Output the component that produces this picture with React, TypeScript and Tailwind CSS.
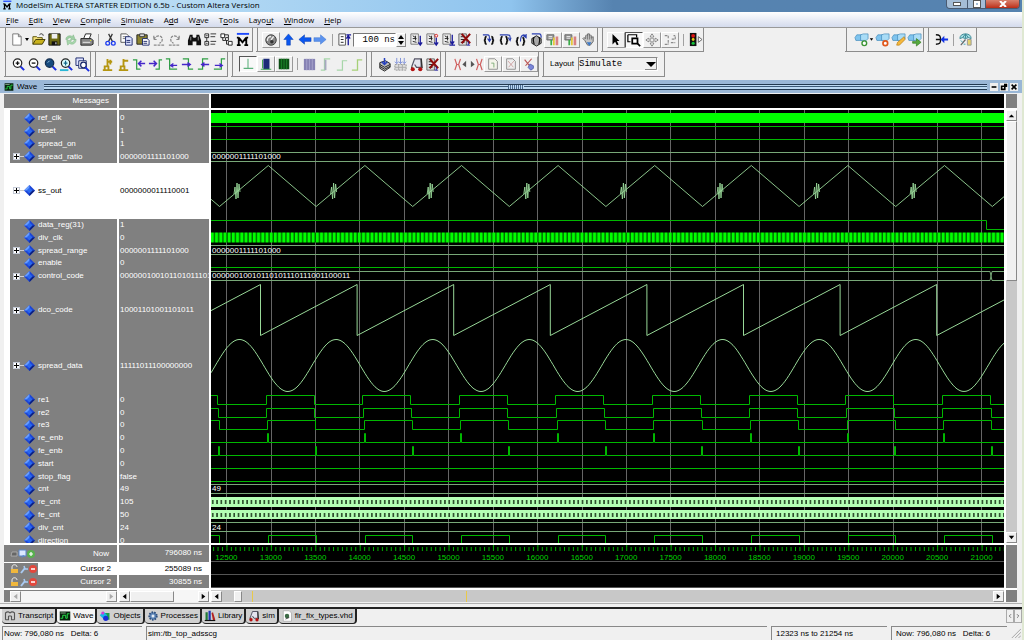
import type { ReactNode } from "react";
import { ChevronLeft, ChevronRight } from "lucide-react";

const NAVY = "#1c2a6b";
const GREEN = "#2f9e44";

// 16x16 toolbar glyphs
const icons: Record<string, ReactNode> = {
  newFile: <path d="M4 2h6l3 3v9H4zM10 2v3h3" fill="#fff" stroke="#777" />,
  open: (
    <>
      <path d="M2 13V5h4l1 1h5v2" fill="#f5e27a" stroke="#5c5208" />
      <path d="M2 13l3-5h10l-3 5z" fill="#c9b21c" stroke="#3f3a08" />
      <path d="M9 3c2-2 4-1 4 1" fill="none" stroke="#222" />
    </>
  ),
  save: (
    <>
      <path d="M2 2h12v12H2z" fill="#6d6a12" stroke="#111" />
      <path d="M5 2h6v5H5z" fill="#eee" />
      <path d="M5 10h6v4H5z" fill="#111" />
      <path d="M9 11h1v2H9z" fill="#fff" />
    </>
  ),
  refresh: (
    <>
      <path d="M3 8c0-4 5-5 7-3l1-2 2 5-5 0 1-1c-2-2-4 0-4 1z" fill="#9fd0a4" stroke="#82b688" strokeWidth=".6" />
      <path d="M14 8c0 5-5 6-7 4l-2 2-1-5 5 0-1 1c2 2 4 0 4-2z" fill="#a9d8ad" stroke="#82b688" strokeWidth=".6" />
    </>
  ),
  print: (
    <>
      <path d="M5 7l2-5h6l-2 5" fill="#fff" stroke="#222" />
      <path d="M2 7h11l2 2v4l-2 1H2z" fill="#888" stroke="#222" />
      <path d="M4 11h8" stroke="#eee" />
      <path d="M12 9h1" stroke="#ff0" />
    </>
  ),
  cut: (
    <>
      <path d="M6 2l4 8M10 2L6 10" stroke="#333" strokeWidth="1.3" />
      <circle cx="5" cy="12" r="2" fill="none" stroke="#1d3cf0" strokeWidth="1.4" />
      <circle cx="11" cy="12" r="2" fill="none" stroke="#1d3cf0" strokeWidth="1.4" />
    </>
  ),
  copy: (
    <>
      <path d="M2 2h6l2 2v7H2z" fill="#fff" stroke="#555" />
      <path d="M4 5h4M4 7h4" stroke="#777" />
      <path d="M7 5h5l2 2v7H7z" fill="#dfe4ff" stroke={NAVY} />
      <path d="M8 9h4M8 11h4" stroke={NAVY} />
    </>
  ),
  paste: (
    <>
      <path d="M2 3h11v10H2z" fill="#8c8430" stroke="#222" />
      <path d="M5 2h5v3H5z" fill="#ddd" stroke="#333" />
      <path d="M8 7h5l2 2v5H8z" fill="#fff" stroke={NAVY} />
      <path d="M9 10h4M9 12h4" stroke={NAVY} />
    </>
  ),
  undo: <path d="M3 4v4h4M3 8c2-5 9-5 9 0 0 2-1 3-3 4M3 14h11" fill="none" stroke="#8a8a8a" strokeWidth="1.300" strokeDasharray="3 1" />,
  redo: <path d="M13 4v4H9M13 8c-2-5-9-5-9 0 0 2 1 3 3 4M2 14h11" fill="none" stroke="#8a8a8a" strokeWidth="1.300" strokeDasharray="3 1" />,
  find: (
    <>
      <path d="M3 3h3v2l1 1h2l1-1V3h3l2 6v5h-5v-4H6v4H1V9z" fill="#111" />
      <path d="M4 5v4M12 5v4" stroke="#999" />
    </>
  ),
  collapse: (
    <>
      <path d="M2 2h4v4H2zM2 10h4v4H2z" fill="#fff" stroke="#222" />
      <path d="M3 4h2M3 12h2M4 6v4M8 2h6M8 5h5M8 10h6M8 13h5" stroke="#333" />
    </>
  ),
  hierarchy: (
    <>
      <path d="M2 2h4v4H2zM7 6h3v3H7zM10 10h4v4h-4z" fill="#fff" stroke="#222" />
      <path d="M6 3h4v3M4 6v3h3M8 9v4h2" fill="none" stroke="#222" />
    </>
  ),
  modelsim: (
    <>
      <path d="M2 2h13" stroke="#1d49ff" strokeWidth="2" />
      <path d="M4 14V6M4 6l4 5 4-5M12 6v8M2 14h4M10 14h4M2 6h2M12 6h2" fill="none" stroke="#000" strokeWidth="2" />
    </>
  ),
  gear: (
    <>
      <circle cx="8" cy="8" r="6" fill="#888" stroke="#333" />
      <path d="M8 8l3-4M4 9a4 4 0 0 1 4-5" stroke="#eee" strokeWidth="1.500" fill="none" />
      <circle cx="9" cy="10" r="2" fill="#333" />
    </>
  ),
  up: <path d="M8 2l5 6h-3v6H6V8H3z" fill="#0a57f0" stroke="#0637a8" strokeWidth=".5" />,
  left: <path d="M2 8l6-5v3h7v4H8v3z" fill="#0a57f0" stroke="#0637a8" strokeWidth=".5" />,
  right: <path d="M14 8L8 3v3H1v4h7v3z" fill="#5b92ee" stroke="#3b73d0" strokeWidth=".5" />,
  restart: (
    <>
      <path d="M2 2h7v12H2z" fill="#fff" stroke="#555" />
      <path d="M4 5h3M4 8h3M4 11h3" stroke="#222" />
      <path d="M12 14V4M10 7l2-3 2 3M10 3h5" fill="none" stroke="#1b1b9a" strokeWidth="1.400" />
    </>
  ),
  run: (
    <>
      <path d="M2 2h8v11H2z" fill="#eee" stroke="#777" />
      <path d="M4 4l3 2M4 7h4M4 10l4 1M7 4v5" stroke="#222" />
      <path d="M12 4v9M10 11l2 3 2-3" fill="none" stroke="#1b1b9a" strokeWidth="1.400" />
    </>
  ),
  runRed: (
    <>
      <path d="M2 2h8v11H2z" fill="#eee" stroke="#777" />
      <path d="M4 4l3 2M4 7h4M4 10l4 1M7 4v5" stroke="#222" />
      <circle cx="12" cy="4" r="1.500" fill="none" stroke="#d22" />
      <path d="M12 6v7M10 11l2 3 2-3" fill="none" stroke="#1b1b9a" strokeWidth="1.400" />
    </>
  ),
  runAll: (
    <>
      <path d="M2 2h8v11H2z" fill="#eee" stroke="#777" />
      <path d="M4 4l3 2M4 7h4M4 10l4 1M7 4v5" stroke="#222" />
      <path d="M12 3v9M10 10l2 3 2-3M9 14h6" fill="none" stroke="#1b1b9a" strokeWidth="1.400" />
    </>
  ),
  stop: (
    <>
      <path d="M2 2h8v12H2z" fill="#ddd" stroke="#666" />
      <path d="M4 5h4M4 8h4M4 11h4" stroke="#222" />
      <path d="M5 2l9 10M14 2L5 12" stroke="#8e0c0c" strokeWidth="2.200" />
      <path d="M12 10v4M10 14h4" stroke="#1b1b9a" />
    </>
  ),
  stepInto: (
    <>
      <path d="M6 5c-3 0 0 4-3 4 3 0 0 4 3 4M11 5c3 0 0 4 3 4-3 0 0 4-3 4" fill="none" stroke="#111" strokeWidth="1.800" />
      <path d="M2 3h5c2 0 2 1 2 6M7 7l2 3 2-3" fill="none" stroke="#2a3fb0" strokeWidth="1.200" />
    </>
  ),
  stepOver: (
    <>
      <path d="M6 5c-3 0 0 4-3 4 3 0 0 4 3 4M9 5c3 0 0 4 3 4-3 0 0 4-3 4" fill="none" stroke="#111" strokeWidth="1.800" />
      <path d="M3 3h8c3 0 3 1 3 4M12 6l2 3 1-3" fill="none" stroke="#2a3fb0" strokeWidth="1.200" />
    </>
  ),
  stepOut: (
    <>
      <path d="M6 6c-3 0 0 4-3 4 3 0 0 4 3 4M10 6c3 0 0 4 3 4-3 0 0 4-3 4" fill="none" stroke="#111" strokeWidth="1.800" />
      <path d="M8 10C8 2 12 2 14 5M11 4l3 2 0-4" fill="none" stroke="#2a3fb0" strokeWidth="1.200" />
    </>
  ),
  stepAll: (
    <>
      <path d="M8 4l5 3v5l-5 3-5-3V7z" fill="#aaa" stroke="#222" />
      <path d="M6 6c-3 0 0 3-2 3 2 0 0 4 2 4M10 6c3 0 0 3 2 3-2 0 0 4-2 4" fill="none" stroke="#111" strokeWidth="1.300" />
      <path d="M3 2h8c2 0 2 2 2 4" fill="none" stroke="#2a3fb0" strokeWidth="1.300" />
    </>
  ),
  profile: (
    <>
      <path d="M1 2h8v6H1z" fill="#999" stroke="#666" />
      <path d="M3 4h4M3 6h4" stroke="#eee" />
      <path d="M5 8h2v6H5z" fill="#3bab4a" />
      <path d="M8 5h2v9H8z" fill="#e5c93a" />
      <path d="M11 4h3v10h-3z" fill="#d98282" />
    </>
  ),
  hand: (
    <>
      <path d="M4 9L2 7l1-1 2 1V4l1-1 1 1V2h2v2l1-1 1 1v2l2-1v5l-3 4H7z" fill="#c4c4c4" stroke="#666" />
      <path d="M7 4v4M9 4v4M11 5v3" stroke="#777" />
      <path d="M6 11h5l-2 4z" fill="#3a78c9" />
    </>
  ),
  pointer: <path d="M4 1l8 8H9l2 4-2 1-2-4-3 3z" fill="#000" />,
  zoomMode: (
    <>
      <path d="M1 2h10v3M1 2v8h3" fill="none" stroke="#000" strokeWidth="1.400" />
      <path d="M6 6h6v6H6z" fill="#fff" stroke="#000" strokeWidth="2" />
      <path d="M12 12l3 3" stroke="#000" strokeWidth="2" />
    </>
  ),
  pan: <path d="M8 1l2 3H9v3h3V6l3 2-3 2V9H9v3h1l-2 3-2-3h1V9H4v1L1 8l3-2v1h3V4H6z" fill="#fff" stroke="#777" />,
  edit: <path d="M2 3h4v3M2 13h4M6 8v5M9 11h5M10 7h4V3h-2" fill="none" stroke="#8a8a8a" strokeWidth="1.300" strokeDasharray="3 1" />,
  traffic: (
    <>
      <path d="M2 1h7v14H2z" fill="#111" />
      <circle cx="5.500" cy="4" r="2" fill="#e01515" />
      <circle cx="5.500" cy="8" r="1.500" fill="#e8cf17" />
      <circle cx="5.500" cy="12" r="1.700" fill="#14c53a" />
      <path d="M11 5l4 3-4 3z" fill="#fff" stroke="#666" />
    </>
  ),
  cubeAdd: (
    <>
      <path d="M1 6l2-3h5v6H2z" fill="#7fc4ee" stroke="#3d86b8" strokeWidth=".7" />
      <path d="M7 3l3-1 5 0v5l-2 2H7z" fill="#a9dcf6" stroke="#3d86b8" strokeWidth=".7" />
      <circle cx="11" cy="12" r="2.500" fill="#fff" stroke="#3c9435" strokeWidth="1.500" />
    </>
  ),
  cubeRemove: (
    <>
      <path d="M1 6l2-3h5v6H2z" fill="#7fc4ee" stroke="#3d86b8" strokeWidth=".7" />
      <path d="M7 3l3-1 5 0v5l-2 2H7z" fill="#a9dcf6" stroke="#3d86b8" strokeWidth=".7" />
      <circle cx="11" cy="12" r="2.500" fill="#fff" stroke="#e0571b" strokeWidth="1.800" />
    </>
  ),
  cubeEdit: (
    <>
      <path d="M1 6l2-3h5v6H2z" fill="#7fc4ee" stroke="#3d86b8" strokeWidth=".7" />
      <path d="M7 3l3-1 5 0v5l-2 2H7z" fill="#a9dcf6" stroke="#3d86b8" strokeWidth=".7" />
      <path d="M14 5l1 3-6 6-3 0 1-3z" fill="#f5b83c" stroke="#b57b16" strokeWidth=".7" />
    </>
  ),
  cubeGo: (
    <>
      <path d="M1 6l2-3h5v6H2z" fill="#7fc4ee" stroke="#3d86b8" strokeWidth=".7" />
      <path d="M7 3l3-1 5 0v5l-2 2H7z" fill="#a9dcf6" stroke="#3d86b8" strokeWidth=".7" />
      <path d="M6 10h4V7l5 4-5 4v-3H6z" fill="#56ab3e" stroke="#33791f" strokeWidth=".7" />
    </>
  ),
  merge: (
    <>
      <path d="M2 3c4 0 5 1 5 5-0 4-1 5-5 5M2 8h5" fill="none" stroke="#111" strokeWidth="1.500" />
      <path d="M7 8l4-4v3h4v2h-4v3z" fill="#1233e6" />
    </>
  ),
  globe: (
    <>
      <path d="M2 7c0-3 2-5 6-5s6 2 6 5l-3-1-3 1-3-1z" fill="#a5dde2" stroke="#3d8a96" />
      <path d="M5 6l3-4 3 4M8 2v5" stroke="#3d8a96" fill="none" />
      <path d="M10 8h4v6h-4z" fill="#e4d36d" stroke="#999" />
      <path d="M3 14l5-6" stroke="#666" strokeWidth="1.300" />
      <path d="M3 9l2 2M6 13h2" stroke="#3aa6b8" />
    </>
  ),
  zoomIn: (
    <>
      <path d="M10 10l4 4" stroke="#1d2fe0" strokeWidth="2.200" />
      <circle cx="7" cy="6.500" r="4.500" fill="#fff" stroke="#222" strokeWidth="1.300" />
      <path d="M5 6.500h4M7 4.500v4" stroke="#111" strokeWidth="1.400" />
    </>
  ),
  zoomOut: (
    <>
      <path d="M10 10l4 4" stroke="#1d2fe0" strokeWidth="2.200" />
      <circle cx="7" cy="6.500" r="4.500" fill="#fff" stroke="#222" strokeWidth="1.300" />
      <path d="M5 6.500h4" stroke="#111" strokeWidth="1.400" />
    </>
  ),
  zoomFull: (
    <>
      <path d="M10 10l4 4" stroke="#1d2fe0" strokeWidth="2.200" />
      <circle cx="7" cy="6.500" r="4.500" fill="#164a7e" stroke="#112c4e" strokeWidth="1.300" />
      <path d="M5 6l2-2" stroke="#a8cbe8" />
    </>
  ),
  zoomCursor: (
    <>
      <path d="M1 14h9" stroke="#29b7d6" strokeWidth="2" />
      <path d="M10 10l4 4" stroke="#1d2fe0" strokeWidth="2.200" />
      <circle cx="7" cy="6.500" r="4.500" fill="#dff" stroke="#222" strokeWidth="1.300" />
      <path d="M5 6.500h4M7 4v5" stroke="#168" strokeWidth="1.300" />
    </>
  ),
  zoomArea: (
    <>
      <path d="M1 1h8v8H1z" fill="#dfe3ff" stroke={NAVY} />
      <path d="M4 4h8v8H4z" fill="#fff" stroke={NAVY} />
      <circle cx="9" cy="8.500" r="3" fill="#fff" stroke={NAVY} strokeWidth="1.300" />
      <path d="M11 11l4 4" stroke="#1d2fe0" strokeWidth="2" />
    </>
  ),
  cursorAdd: <path d="M3 14h10M5 14v-4h4v4M8 10V2M8 5h5M11 3v5" fill="none" stroke="#b59610" strokeWidth="2" />,
  cursorDel: <path d="M3 14h10M5 14v-4h4v4M8 10V2M8 4h5" fill="none" stroke="#b59610" strokeWidth="2" />,
  edgePrev: (
    <>
      <path d="M1 3h4v10h4" fill="none" stroke={GREEN} strokeWidth="1.300" />
      <path d="M14 7H8M10 4L7 7l3 3" fill="none" stroke="#4527c9" strokeWidth="1.600" />
    </>
  ),
  edgeNext: (
    <>
      <path d="M8 13h4V3h3" fill="none" stroke={GREEN} strokeWidth="1.300" />
      <path d="M1 7h7M6 4l3 3-3 3" fill="none" stroke="#4527c9" strokeWidth="1.600" />
    </>
  ),
  fallPrev: (
    <>
      <path d="M2 2h4v11h8" fill="none" stroke={GREEN} strokeWidth="1.300" />
      <path d="M14 9H8M10 7L7 9l3 2" fill="none" stroke="#4527c9" strokeWidth="1.400" />
    </>
  ),
  fallNext: (
    <>
      <path d="M3 2h6v11h5" fill="none" stroke={GREEN} strokeWidth="1.300" />
      <path d="M2 8h8M8 6l3 2-3 2" fill="none" stroke="#4527c9" strokeWidth="1.400" />
    </>
  ),
  risePrev: (
    <>
      <path d="M2 13h5V2h6" fill="none" stroke={GREEN} strokeWidth="1.300" />
      <path d="M14 8H7M9 6L6 8l3 2" fill="none" stroke="#4527c9" strokeWidth="1.400" />
    </>
  ),
  riseNext: (
    <>
      <path d="M2 13h8V2h4" fill="none" stroke={GREEN} strokeWidth="1.300" />
      <path d="M3 9h7M8 7l3 2-3 2" fill="none" stroke="#4527c9" strokeWidth="1.400" />
    </>
  ),
  flatMode: <path d="M3 13h11M8 2v11" stroke="#5cb07b" strokeWidth="1.200" />,
  barsBlue: (
    <>
      <path d="M5 2h7v12H5z" fill="#1b2a78" />
      <path d="M2 14h12M4 3v10" stroke={GREEN} />
    </>
  ),
  barsGreen: (
    <>
      <path d="M2 2h12v12H2z" fill="#0c4f14" />
      <path d="M5 2v12M8 2v12M11 2v12" stroke="#1f8a2c" />
    </>
  ),
  barsFaded: (
    <>
      <path d="M2 2h12v12H2z" fill="#8783b4" />
      <path d="M5 2v12M8 2v12M11 2v12" stroke="#a5a2cc" />
    </>
  ),
  riseFaded: (
    <>
      <path d="M3 14h4V2h6" fill="none" stroke="#a7d6a9" strokeWidth="1.500" />
      <path d="M8 3v11" stroke="#a8a8c0" strokeWidth="2" />
    </>
  ),
  riseThin: <path d="M3 14h6V4h5" fill="none" stroke="#a7d6a9" strokeWidth="1.300" />,
  riseYellow: <path d="M2 14h6V3h5" fill="none" stroke="#a6d077" strokeWidth="1.400" />,
  cubeDown: (
    <>
      <path d="M3 6l6-2 5 3v4l-6 4-5-3z" fill="#bbb" stroke="#222" />
      <path d="M3 8l5 3 6-3M3 10l5 3 6-3" fill="none" stroke="#222" />
      <path d="M8 1v6M5 5l3 3 3-3" fill="none" stroke="#2740c0" strokeWidth="1.600" />
    </>
  ),
  cubesDown: (
    <>
      <path d="M2 8h12v6H2z" fill="#ddd" stroke="#999" strokeDasharray="2 1" />
      <path d="M2 11h12M6 8v6M10 8v6" stroke="#aaa" />
      <path d="M4 1v6M8 1v6M12 1v6M2 5l2 2 2-2M6 5l2 2 2-2M10 5l2 2 2-2" fill="none" stroke="#7d8fd8" />
    </>
  ),
  design: (
    <>
      <path d="M3 10L6 2h7v9H8l-2-3" fill="#e4e4ee" stroke="#556" strokeWidth="1.300" />
      <path d="M13 2l1 10M3 10v3" stroke="#333" strokeWidth="1.500" />
      <circle cx="4" cy="13" r="2.200" fill="#b51212" />
      <circle cx="12" cy="13" r="2.200" fill="#b51212" />
    </>
  ),
  xLeft: (
    <>
      <path d="M2 2l2 6-2 6M8 2L6 8l2 6M4 8h2" fill="none" stroke="#d06060" strokeWidth="1.300" />
      <path d="M14 4v7l-4-3z" fill="#555" />
    </>
  ),
  xRight: (
    <>
      <path d="M8 2l2 6-2 6M14 2l-2 6 2 6M10 8h2" fill="none" stroke="#d06060" strokeWidth="1.300" />
      <path d="M2 4v7l4-3z" fill="#555" />
    </>
  ),
  docGreen: (
    <>
      <path d="M3 2h7l3 3v9H3z" fill="#f4f4ea" stroke="#888" />
      <path d="M6 7h3v5" fill="none" stroke="#77a870" />
    </>
  ),
  docRed: (
    <>
      <path d="M3 2h7l3 3v9H3z" fill="#eee" stroke="#888" />
      <path d="M5 5l6 7M11 5l-6 7" stroke="#b77" strokeDasharray="2 1" />
    </>
  ),
  docRemove: (
    <>
      <path d="M3 3l8 10M11 2L4 10" stroke="#b55" strokeWidth="1.300" />
      <path d="M9 8l4 2v3l-3 2-3-3z" fill="#7b87d8" stroke="#5661b0" />
    </>
  ),
  transcript: <path d="M2 13V4c3-3 5-1 6 0M14 13V4c-3-3-5-1-6 0M2 13h4V8M14 13h-4V8M6 8h4" fill="none" stroke="#555" strokeWidth="1.500" />,
  wave: (
    <>
      <path d="M1 2h14v12H1z" fill="#06210c" />
      <path d="M2 11h3V7h4v4h2V5h3" fill="none" stroke="#27e04a" strokeWidth="1.300" />
      <path d="M2 4h7" stroke="#b7d3b7" />
    </>
  ),
  objects: (
    <>
      <path d="M7 4h7v9H7z" fill="#1aa04a" />
      <path d="M6 2l5 5-5 5-5-5z" fill="#18b4e8" />
      <circle cx="9" cy="11" r="3.500" fill="#1b2fd8" />
      <circle cx="5" cy="4" r="2" fill="#d43bd4" />
    </>
  ),
  processes: (
    <>
      <circle cx="8" cy="8" r="5" fill="#5e86b8" stroke="#2f4f7d" strokeWidth="2.500" strokeDasharray="2 1.500" />
      <circle cx="8" cy="8" r="2" fill="#e5ecf5" />
    </>
  ),
  library: (
    <>
      <path d="M2 3h3v11H2z" fill="#207a38" />
      <path d="M6 1h3v13H6z" fill="#1f37b4" />
      <path d="M10 4l2-1 3 10-3 1z" fill="#b32020" />
      <path d="M1 14h14" stroke="#111" strokeWidth="1.500" />
    </>
  ),
  source: (
    <>
      <path d="M3 1h8l3 3v11H3z" fill="#fff" stroke="#aaa" />
      <circle cx="8" cy="8" r="3" fill="#3c6b46" />
      <path d="M6 12l5-2" stroke="#222" />
    </>
  ),
};

const Icon = ({ name, className = "size-[15px]" }: { name: string; className?: string }) => (
  <svg viewBox="0 0 16 16" className={`shrink-0 ${className}`} aria-hidden="true">
    {icons[name]}
  </svg>
);

const Tool = ({ name }: { name: string }) => (
  <button aria-label={name} className="flex w-4 shrink-0 items-center justify-center">
    <Icon name={name} />
  </button>
);

const RaisedTool = ({ name, pressed = false }: { name: string; pressed?: boolean }) => (
  <button
    aria-label={name}
    className={`flex h-4 w-[18px] shrink-0 items-center justify-center border ${
      pressed ? "border-r-white border-b-white border-t-[#555] border-l-[#555] bg-[#f8f8f8]" : "border-t-white border-l-white border-r-[#999] border-b-[#999]"
    }`}
  >
    <Icon name={name} className="size-[14px]" />
  </button>
);

const Sep = () => (
  <div className="flex w-2 shrink-0 items-center justify-center">
    <div className="h-3 w-px bg-[#a0a0a0]" />
  </div>
);

const Group = ({ children, className = "" }: { children: ReactNode; className?: string }) => (
  <div className={`flex shrink-0 items-center border-r border-b border-[#8c8c8c] pl-1 ${className}`}>
    <div className="-ml-[3px] mr-[2px] h-full w-px shrink-0 bg-[#8c8c8c]" />
    {children}
  </div>
);

const menus = [
  ["", "F", "ile"],
  ["", "E", "dit"],
  ["", "V", "iew"],
  ["", "C", "ompile"],
  ["", "S", "imulate"],
  ["A", "d", "d"],
  ["W", "a", "ve"],
  ["T", "o", "ols"],
  ["Layo", "u", "t"],
  ["", "W", "indow"],
  ["", "H", "elp"],
];

type Signal = { name: string; value: string; tall?: boolean; bus?: boolean; selected?: boolean; label?: string };

const signals: Signal[] = [
  { name: "ref_clk", value: "0" },
  { name: "reset", value: "1" },
  { name: "spread_on", value: "1" },
  { name: "spread_ratio", value: "0000001111101000", bus: true, label: "0000001111101000" },
  { name: "ss_out", value: "0000000011110001", bus: true, tall: true, selected: true },
  { name: "data_reg(31)", value: "1" },
  { name: "div_clk", value: "0" },
  { name: "spread_range", value: "0000001111101000", bus: true, label: "0000001111101000" },
  { name: "enable", value: "0" },
  { name: "control_code", value: "000000100101101011101", bus: true, label: "00000010010110101110111001100011" },
  { name: "dco_code", value: "10001101001101011", bus: true, tall: true },
  { name: "spread_data", value: "11111011100000000", bus: true, tall: true },
  { name: "re1", value: "0" },
  { name: "re2", value: "0" },
  { name: "re3", value: "0" },
  { name: "re_enb", value: "0" },
  { name: "fe_enb", value: "0" },
  { name: "start", value: "0" },
  { name: "stop_flag", value: "false" },
  { name: "cnt", value: "49", label: "49" },
  { name: "re_cnt", value: "105" },
  { name: "fe_cnt", value: "50" },
  { name: "div_cnt", value: "24", label: "24" },
  { name: "direction", value: "0" },
];

const SignalRows = ({ render, className = "" }: { render: (s: Signal) => ReactNode; className?: string }) => (
  <div className={`flex h-[437px] flex-col pt-[2px] ${className}`}>
    {signals.map((s) => (
      <div key={s.name} className={`flex min-h-0 items-center ${s.tall ? "flex-[13]" : "flex-[3]"}`}>
        {render(s)}
      </div>
    ))}
  </div>
);

const Diamond = () => (
  <svg viewBox="0 0 11 11" className="size-[11px] shrink-0" aria-hidden="true">
    <path d="M5.500 0L11 5.500 5.500 11 0 5.500z" fill="#1b44d6" />
    <path d="M5.500 0L0 5.500h5.500z" fill="#6aa0ff" />
    <path d="M5.500 11L11 5.500H5.500z" fill="#0d2080" />
    <path d="M5.500 2.500L8.500 5.500 5.500 8.500 2.500 5.500z" fill="#2a68f0" />
  </svg>
);

// Trace geometry. View is 793 wide (12323 ns to 21254 ns), 433 high.
const W = 793;
const PERIOD = 96.6;
const cycles = Array.from({ length: 10 }, (_, i) => i - 1);

const triangle = cycles.map((c) => `${c < 0 ? "M" : "L"}${8.5 + c * PERIOD} 96.500L${57.3 + c * PERIOD} 55.500`).join("");

const saw = cycles.map((c) => `${c < 0 ? "M" : "L"}${49.5 + (c - 1) * PERIOD} 225.500L${49.5 + c * PERIOD} 174.500V225.500`).join("");

const sine = Array.from({ length: W / 2 + 2 }, (_, i) => {
  const x = i * 2;
  const y = 255.5 - 26 * Math.cos(((x - 28.5) / PERIOD) * 2 * Math.PI);
  return `${i ? "L" : "M"}${x} ${y.toFixed(1)}`;
}).join("");

const square = (high: number, low: number, shift: number) =>
  `M0 ${high}` + cycles.slice(1).map((c) => `H${Math.round(6 + shift + c * PERIOD) + 0.5}V${low}H${Math.round(54.5 + shift + c * PERIOD) + 0.5}V${high}`).join("");

const pulses = (base: number, first: number) =>
  `M0 ${base}` + cycles.slice(1).map((c) => {
    const x = Math.round(first + c * PERIOD) + 0.5;
    return `H${x}V${base - 9}h1V${base}`;
  }).join("") + `H${W}`;

const direction = "M0 425.500" + cycles.slice(1).map((c) => `H${Math.round(8 + c * PERIOD) + 0.5}V435H${Math.round(57 + c * PERIOD) + 0.5}V425.500`).join("");

const gridLines = Array.from({ length: 18 }, (_, i) => Math.round(15.2 + i * 44.42) + 0.5);

const Traces = () => (
  <svg viewBox="0 0 793 433" preserveAspectRatio="none" className="block h-[433px] w-full" role="img" aria-label="Waveforms">
    <defs>
      <pattern id="divClk" width="4.200" height="10" patternUnits="userSpaceOnUse">
        <path d="M0 0h5v10H0z" fill="#006a00" />
        <path d="M0 0h2.800v10H0z" fill="#0f0" />
      </pattern>
      <pattern id="cntTicks" width="4.300" height="10" patternUnits="userSpaceOnUse">
        <path d="M1 0h1.500v10H1z" fill="#1d3a1d" />
      </pattern>
    </defs>
    {gridLines.map((x) => (
      <path key={x} d={`M${x} 0V433`} stroke="#666" />
    ))}
    <path d="M0 3h793v10H0z" fill="#0f0" />
    <g fill="none" stroke="#00b800">
      <path d="M0 16.500H793M0 29.500H793M0 110.500H775.500V119.500H793M0 157.500H793M0 358.500H793M0 371.500H793" />
      <path d={square(285.5, 294.5, 0)} />
      <path d={square(298.5, 307.5, 0.7)} />
      <path d={square(310.5, 319.5, 1.5)} />
      <path d={pulses(332.5, 56)} />
      <path d={pulses(345.5, 7.3)} />
      <path d={direction} />
    </g>
    <g fill="none" stroke="#78a878">
      <path d="M0 42.500H793M0 51.500H793M0 135.500H793M0 144.500H793M0 161.500H779L781 170.500H793M0 170.500H779L781 161.500H793" />
      <path d="M0 374.500H793M0 383.500H793M0 412.500H793M0 421.500H793" />
    </g>
    <g fill="none" stroke="#98d898">
      <path d={triangle} strokeWidth=".9" />
      {cycles.slice(1).map((c) => (
        <path key={c} d={`M${23 + c * PERIOD} 84l1-7 1 12 1-16 1 15 1-14 1 8`} strokeWidth=".9" />
      ))}
      <path d={saw} />
      <path d={sine} />
    </g>
    <path d="M0 122.500h793v10H0z" fill="url(#divClk)" />
    <path d="M0 387h793v10H0zM0 400h793v9H0z" fill="#b4ffb4" />
    <path d="M0 390h793v4H0zM0 403h793v4H0z" fill="url(#cntTicks)" />
  </svg>
);

const ticks = Array.from({ length: 179 }, (_, i) => ({ x: 2.1 + i * 4.442, major: i % 10 === 3 }));

const Timeline = () => (
  <svg className="block h-[43px] w-full bg-black" role="img" aria-label="Time axis">
    {ticks.map(({ x, major }) => (
      <rect key={x} x={`${(x / W) * 100}%`} y={major ? 0 : 2} width="1" height={major ? 6 : 4} fill="#00b400" />
    ))}
    {ticks.filter((t) => t.major).map(({ x }, i) => (
      <text key={x} x={`${(x / W) * 100}%`} y="15" textAnchor="middle" fill="#00d000" fontSize="8">
        {12500 + i * 500}
      </text>
    ))}
    <rect y="16" width="100%" height="1" fill="#555" />
    <rect y="29" width="100%" height="1" fill="#555" />
    <rect y="42" width="100%" height="1" fill="#555" />
  </svg>
);

const CursorIcons = () => (
  <svg viewBox="0 0 28 10" className="h-[10px] w-7 shrink-0" aria-hidden="true">
    <path d="M2 5V3c0-3 5-3 5 0" fill="none" stroke="#eee" />
    <path d="M1 5h7v4H1z" fill="#f0b73c" />
    <path d="M11 9l4-5" stroke="#a9caf2" strokeWidth="2" />
    <path d="M14 2l1 3 3 0" fill="none" stroke="#a9caf2" strokeWidth="1.500" />
    <circle cx="23" cy="5" r="4" fill="#e2483d" />
    <path d="M21 5h4" stroke="#fff" strokeWidth="1.500" />
  </svg>
);

const NowIcons = () => (
  <svg viewBox="0 0 28 10" className="h-[10px] w-7 shrink-0" aria-hidden="true">
    <path d="M1 7l1-4h5v4z" fill="#666" stroke="#bbb" strokeWidth=".7" />
    <path d="M9 1h7v6H9z" fill="#dbe8ff" stroke="#5b86c9" />
    <path d="M11 9l2-3 2 1z" fill="#5b86c9" />
    <circle cx="21" cy="5" r="4" fill="#58b04e" />
    <path d="M19 5h4M21 3v4" stroke="#fff" strokeWidth="1.200" />
  </svg>
);

const Arrow = ({ dir, faded = false }: { dir: "left" | "right" | "up" | "down"; faded?: boolean }) => {
  const paths = { left: "M7 2v6L3 5z", right: "M3 2v6l4-3z", up: "M2 7h6L5 4z", down: "M2 3h6L5 7z" };
  return (
    <button aria-label={dir} className="flex size-[11px] shrink-0 items-center justify-center border border-t-white border-l-white border-r-[#888] border-b-[#888] bg-[#f0f0f0]">
      <svg viewBox="0 0 10 10" className="size-[9px]">
        <path d={paths[dir]} fill={faded ? "#aaa" : "#000"} />
      </svg>
    </button>
  );
};

const tabs = [
  { label: "Transcript", icon: "transcript" },
  { label: "Wave", icon: "wave" },
  { label: "Objects", icon: "objects" },
  { label: "Processes", icon: "processes" },
  { label: "Library", icon: "library" },
  { label: "sim", icon: "design" },
  { label: "fir_fix_types.vhd", icon: "source" },
];

const TitleBar = () => (
  <header className="flex h-3 shrink-0 items-start bg-linear-to-r from-[#bfe0f5] from-10% via-[#8fc4ee] via-50% to-[#5683b0] to-60%">
    <Icon name="modelsim" className="ml-[2px] size-[10px]" />
    <h1 className="ml-1 font-['Open_Sans',sans-serif] text-[8px] leading-[9px] whitespace-nowrap">ModelSim ALTERA STARTER EDITION 6.5b - Custom Altera Version</h1>
    <div className="mr-[2px] ml-auto flex h-[9px] overflow-hidden rounded-b-sm border border-t-0 border-[#4a5a70]">
      <button aria-label="Minimize" className="flex w-5 items-center justify-center bg-[#a5bdd6]">
        <span className="h-1 w-2 border border-[#555] bg-white" />
      </button>
      <button aria-label="Restore" className="flex w-[19px] items-center justify-center border-x border-[#4a5a70] bg-[#a5bdd6]">
        <span className="size-[6px] border-2 border-white outline outline-[#555]" />
      </button>
      <button aria-label="Close" className="flex w-[33px] items-center justify-center bg-linear-to-b from-[#d8806c] to-[#bb2b14]">
        <svg viewBox="0 0 8 6" className="h-[6px] w-2">
          <path d="M1 0l6 6M7 0L1 6" stroke="#fff" strokeWidth="2" />
        </svg>
      </button>
    </div>
  </header>
);

const MenuBar = () => (
  <nav className="flex h-4 shrink-0 items-center gap-[10px] border-b border-[#999] bg-linear-to-b from-white to-[#d4dbed] pl-[6px] font-['Open_Sans',sans-serif] text-[8px]">
    {menus.map(([pre, key, post]) => (
      <button key={pre + key + post} className="leading-3">
        {pre}
        <span className="underline">{key}</span>
        {post}
      </button>
    ))}
  </nav>
);

const Toolbars = () => (
  <div className="shrink-0 pb-[3px] pl-1">
    <div className="flex h-6 gap-[3px] pr-[45px]">
      <Group className="pr-[2px]">
        <Tool name="newFile" />
        <svg viewBox="0 0 6 4" className="h-1 w-[6px] shrink-0"><path d="M1 0h4L3 3z" /></svg>
        <Tool name="open" />
        <Tool name="save" />
        <Tool name="refresh" />
        <Tool name="print" />
        <Sep />
        <Tool name="cut" />
        <Tool name="copy" />
        <Tool name="paste" />
        <Tool name="undo" />
        <Tool name="redo" />
        <div className="w-1" />
        <Tool name="find" />
        <Tool name="collapse" />
        <Tool name="hierarchy" />
        <Tool name="modelsim" />
      </Group>
      <Group className="pr-px">
        <div className="w-[2px]" />
        <RaisedTool name="gear" />
        <Tool name="up" />
        <Tool name="left" />
        <Tool name="right" />
        <Sep />
        <Tool name="restart" />
        <input
          aria-label="Run length"
          defaultValue="100 ns"
          className="ml-px h-[14px] w-[43px] border border-t-[#777] border-l-[#777] border-r-white border-b-white bg-white text-right font-['Liberation_Mono',monospace] text-[9px]"
        />
        <button aria-label="Step run length" className="mr-[2px] flex h-[14px] w-[10px] shrink-0 items-center justify-center border border-t-white border-l-white border-r-[#888] border-b-[#888]">
          <svg viewBox="0 0 8 12" className="h-3 w-2"><path d="M1 5h6L4 1zM1 7h6l-3 4z" /></svg>
        </button>
        <Tool name="run" />
        <Tool name="runRed" />
        <Tool name="runAll" />
        <Tool name="stop" />
        <Sep />
        <Tool name="stepInto" />
        <Tool name="stepOver" />
        <Tool name="stepOut" />
        <Tool name="stepAll" />
        <RaisedTool name="profile" />
        <RaisedTool name="profile" />
        <Tool name="hand" />
      </Group>
      <Group>
        <div className="w-[2px]" />
        <RaisedTool name="pointer" />
        <RaisedTool name="zoomMode" pressed />
        <RaisedTool name="pan" />
        <RaisedTool name="edit" />
        <Sep />
        <Tool name="traffic" />
      </Group>
      <Group className="ml-auto pr-px">
        <div className="w-1" />
        <Tool name="cubeAdd" />
        <svg viewBox="0 0 6 4" className="h-1 w-[5px] shrink-0"><path d="M1 0h4L3 3z" /></svg>
        <Tool name="cubeRemove" />
        <Tool name="cubeEdit" />
        <Tool name="cubeGo" />
      </Group>
      <Group className="pr-[3px]">
        <div className="w-[2px]" />
        <Tool name="merge" />
        <Sep />
        <Tool name="globe" />
      </Group>
    </div>
    <div className="flex h-[25px] gap-[3px]">
      <Group>
        <div className="w-[2px]" />
        <Tool name="zoomIn" />
        <Tool name="zoomOut" />
        <Tool name="zoomFull" />
        <Tool name="zoomCursor" />
        <Tool name="zoomArea" />
      </Group>
      <Group>
        <div className="w-px" />
        <Tool name="cursorAdd" />
        <Tool name="cursorDel" />
        <Tool name="edgePrev" />
        <Tool name="edgeNext" />
        <Tool name="fallPrev" />
        <Tool name="fallNext" />
        <Tool name="risePrev" />
        <Tool name="riseNext" />
      </Group>
      <Group className="pr-px">
        <div className="w-1" />
        <RaisedTool name="flatMode" pressed />
        <RaisedTool name="barsBlue" />
        <RaisedTool name="barsGreen" />
        <Sep />
        <Tool name="barsFaded" />
        <Tool name="riseFaded" />
        <Tool name="riseThin" />
        <Tool name="riseYellow" />
      </Group>
      <Group>
        <div className="w-[2px]" />
        <Tool name="cubeDown" />
        <Tool name="cubesDown" />
        <Tool name="design" />
        <Tool name="stop" />
      </Group>
      <Group>
        <div className="w-1" />
        <Tool name="xLeft" />
        <Tool name="xRight" />
        <RaisedTool name="docGreen" />
        <RaisedTool name="docRed" />
        <RaisedTool name="docRemove" />
      </Group>
      <Group className="pr-[6px]">
        <label htmlFor="layout" className="ml-1 text-[8px]">Layout</label>
        <div className="relative ml-1 flex">
          <select
            id="layout"
            className="h-[14px] w-20 appearance-none border border-t-[#888] border-l-[#888] border-r-white border-b-white bg-[#f0f0f0] font-['Liberation_Mono',monospace] text-[9px] leading-3"
          >
            <option>Simulate</option>
          </select>
          <svg viewBox="0 0 12 12" className="pointer-events-none absolute top-px right-px size-3">
            <path d="M0 11.500h11.500V0" fill="none" stroke="#888" />
            <path d="M1 4h10L6 9z" />
          </svg>
        </div>
      </Group>
    </div>
  </div>
);

const WavePanel = () => (
  <section className="flex min-h-0 flex-1 flex-col">
    <div className="flex h-[13px] shrink-0 items-center bg-[#9ab7d6] px-1">
      <Icon name="wave" className="size-[10px]" />
      <h2 className="mx-[3px] w-6 text-[8px]">Wave</h2>
      <div className="flex h-[6px] flex-1 justify-center border-y border-[#22394f] bg-[#bcd9f2]">
        <div className="mt-px h-px flex-1 bg-[#3d5a78]" />
        <div className="h-1 w-4 bg-[repeating-linear-gradient(90deg,#4b6c90_0_1px,#bcd9f2_1px_2px)]" />
        <div className="mt-px h-px flex-1 bg-[#3d5a78]" />
      </div>
      <div className="ml-[3px] flex gap-[2px]">
        {["M2 5h6", "M2 4h4v4H2zM5 2h3v3", "M2 2l6 6M8 2L2 8"].map((d) => (
          <button key={d} aria-label="Panel control" className="size-2 bg-[#eee]">
            <svg viewBox="0 0 10 10"><path d={d} fill="none" stroke="#000" strokeWidth="2" /></svg>
          </button>
        ))}
      </div>
    </div>

    <div className="mt-px mr-[5px] ml-1 grid min-h-0 flex-1 grid-cols-[113px_90px_minmax(0,1fr)_11px] grid-rows-[14px_minmax(0,1fr)_43px_12px] gap-[2px] bg-white">
      <div className="bg-[#808080] pr-2 text-right text-[8px] leading-[14px] text-white">Messages</div>
      <div className="bg-[#808080]" />
      <div className="bg-black" />
      <div className="bg-[#808080]" />

      <div className="overflow-hidden bg-[#808080]">
        <SignalRows
          className="border-l-[6px] border-white text-white"
          render={(s) => (
            <div className={`flex h-full w-full items-center pl-[3px] ${s.selected ? "bg-white text-black" : ""}`}>
              {s.bus ? (
                <>
                  <button aria-label={`Expand ${s.name}`} className="flex size-[7px] shrink-0 items-center justify-center border border-[#c4cad6] bg-white">
                    <svg viewBox="0 0 5 5" className="size-[5px]"><path d="M0 2.500h5M2.500 0v5" stroke="#000" /></svg>
                  </button>
                  <span className="h-px w-1 bg-[#ccc]" />
                </>
              ) : (
                <span className="w-[11px]" />
              )}
              <Diamond />
              <span className="ml-[3px] leading-3">{s.name}</span>
            </div>
          )}
        />
      </div>
      <div className="overflow-hidden bg-[#808080] text-white">
        <SignalRows
          render={(s) => <div className={`flex h-full w-full items-center overflow-hidden pl-px leading-3 ${s.selected ? "bg-white text-black" : ""}`}>{s.value}</div>}
        />
      </div>
      <div className="relative overflow-hidden bg-black">
        <Traces />
        <SignalRows className="absolute inset-x-0 top-0 text-white" render={(s) => <span className="pl-px leading-3">{s.label}</span>} />
      </div>
      <div className="flex flex-col bg-[#c8c8c8]">
        <Arrow dir="up" />
        <div className="h-40 border border-t-white border-l-white border-r-[#888] border-b-[#888] bg-[#f0f0f0]" />
        <div className="flex-1" />
        <Arrow dir="down" />
      </div>

      <div className="flex flex-col bg-[#808080] text-white">
        <div className="flex flex-1 items-center pl-[6px]">
          <NowIcons />
          <span className="flex-1 pr-2 text-right">Now</span>
        </div>
        <div className="flex h-[13px] items-center border-t border-white pl-[6px]">
          <CursorIcons />
          <span className="h-full flex-1 bg-white pr-[6px] text-right leading-3 text-black">Cursor 2</span>
        </div>
        <div className="flex h-[13px] items-center pl-[6px]">
          <CursorIcons />
          <span className="flex-1 pr-[6px] text-right">Cursor 2</span>
        </div>
      </div>
      <div className="flex flex-col bg-[#808080] text-right text-white">
        <div className="flex-1 pr-[7px] leading-4">796080 ns</div>
        <div className="h-[13px] bg-white pr-[7px] leading-[13px] text-black">255089 ns</div>
        <div className="h-[13px] pr-[7px] leading-[13px]">30855 ns</div>
      </div>
      <Timeline />
      <div className="bg-[#808080]" />

      <div className="flex items-center bg-[#808080] pl-[6px]">
        <Arrow dir="left" faded />
        <div className="h-[11px] flex-1 bg-[#f6f6f6]" />
        <Arrow dir="right" faded />
      </div>
      <div className="flex items-center bg-[#f6f6f6]">
        <Arrow dir="left" />
        <div className="h-[11px] w-11 border border-t-white border-l-white border-r-[#888] border-b-[#888] bg-[#f0f0f0]" />
        <div className="flex-1" />
        <Arrow dir="right" />
      </div>
      <div className="flex items-center bg-[#c8c8c8]">
        <Arrow dir="left" />
        <div className="ml-3 h-[11px] w-2 border border-t-white border-l-white border-r-[#888] border-b-[#888] bg-[#f0f0f0]" />
        <div className="ml-[10px] h-[11px] w-px bg-[#e8c94a]" />
        <div className="h-[11px] w-[27%] border-r border-[#e8c94a]" />
        <div className="flex-1" />
        <Arrow dir="right" />
      </div>
      <div className="bg-[#808080]" />
    </div>
  </section>
);

const App = () => {
  return (
    <div className="flex h-screen flex-col overflow-hidden border-r-2 border-[#dfe8d2] bg-[#f0f0f0] font-['Liberation_Sans',Arial,sans-serif] text-[8px] leading-3 text-black">
      <TitleBar />
      <MenuBar />
      <Toolbars />
      <WavePanel />

      <div className="mt-px flex h-[22px] shrink-0 flex-col border-t border-[#b0b0b0] pt-[3px]">
        <div className="flex h-4 items-start border-t-2 border-[#222] pl-[2px]">
          {tabs.map((t) => (
            <button
              key={t.label}
              className={`flex h-[15px] items-center gap-[2px] rounded-b-sm border-r-2 border-b border-[#222] pr-[2px] pl-[2px] ${t.label === "Wave" ? "bg-[#f4f4f4]" : "bg-[#d0d0d0]"}`}
            >
              <Icon name={t.icon} className="size-3" />
              {t.label}
            </button>
          ))}
          <div className="ml-auto flex">
            <button aria-label="Scroll tabs left" className="w-2 border border-[#aaa]"><ChevronLeft className="h-3 w-[6px]" /></button>
            <button aria-label="Scroll tabs right" className="w-2 border border-[#aaa]"><ChevronRight className="h-3 w-[6px]" /></button>
          </div>
        </div>
      </div>
      <footer className="mt-px flex h-[14px] shrink-0 items-center gap-1 pl-[2px] leading-[13px]">
        <div className="h-full w-[140px] border-t border-l border-[#888] pl-px whitespace-pre">Now: 796,080 ns   Delta: 6</div>
        <div className="h-full flex-1 border-t border-l border-[#888] pl-px">sim:/tb_top_adsscg</div>
        <div className="h-full w-[116px] border-t border-l border-[#888] pl-1">12323 ns to 21254 ns</div>
        <div className="h-full w-[116px] border-t border-l border-[#888] pl-1 whitespace-pre">Now: 796,080 ns   Delta: 6</div>
        <svg viewBox="0 0 12 12" className="mr-px size-[10px]"><path d="M1 12L12 1M5 12l7-7M9 12l3-3" stroke="#999" /></svg>
      </footer>
    </div>
  );
};

export default App;
